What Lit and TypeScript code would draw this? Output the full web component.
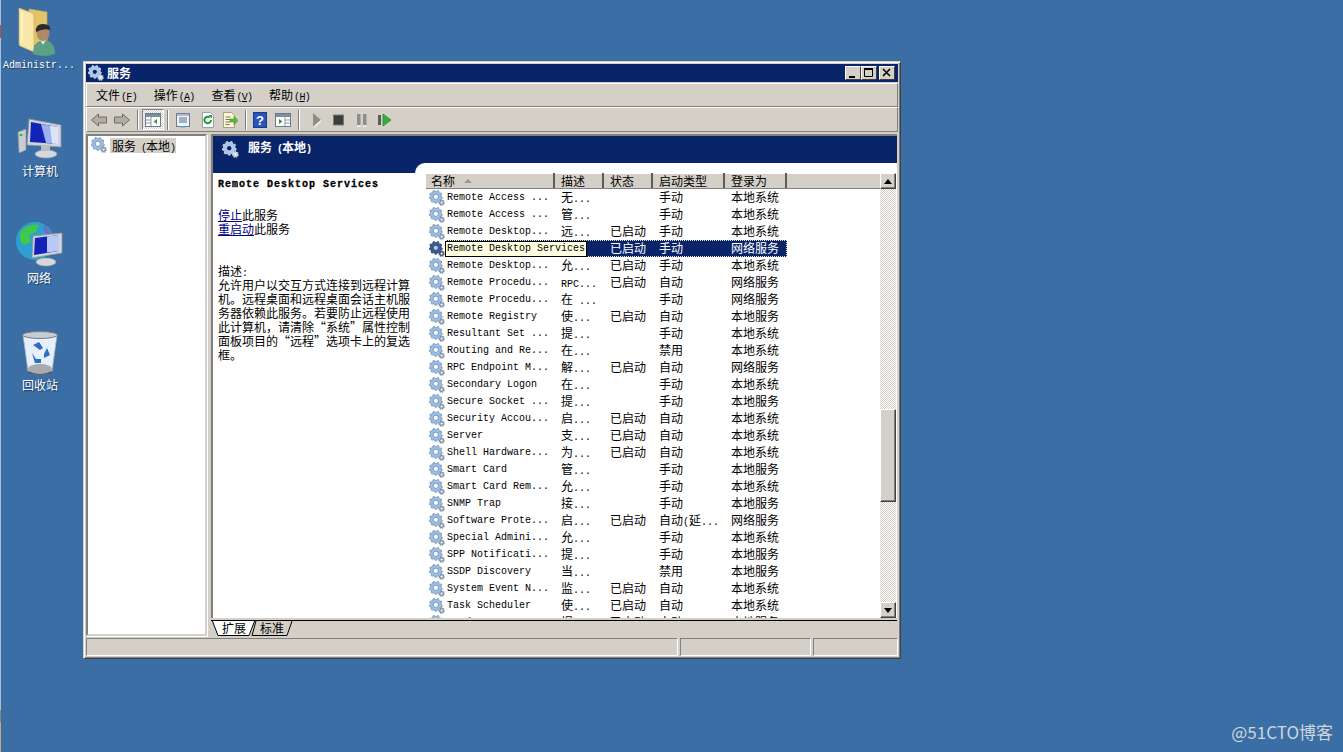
import { LitElement, html, css, svg } from "lit";
import { customElement } from "lit/decorators.js";

// name, desc, status, start type, logon -- name is already elided the way the MMC list does it
const ROWS: string[][] = [
  ["Remote Access ...", "无...", "", "手动", "本地系统"],
  ["Remote Access ...", "管...", "", "手动", "本地系统"],
  ["Remote Desktop...", "远...", "已启动", "手动", "本地系统"],
  ["Remote Desktop Services", "", "已启动", "手动", "网络服务"],
  ["Remote Desktop...", "允...", "已启动", "手动", "本地系统"],
  ["Remote Procedu...", "RPC...", "已启动", "自动", "网络服务"],
  ["Remote Procedu...", "在 ...", "", "手动", "网络服务"],
  ["Remote Registry", "使...", "已启动", "自动", "本地服务"],
  ["Resultant Set ...", "提...", "", "手动", "本地系统"],
  ["Routing and Re...", "在...", "", "禁用", "本地系统"],
  ["RPC Endpoint M...", "解...", "已启动", "自动", "网络服务"],
  ["Secondary Logon", "在...", "", "手动", "本地系统"],
  ["Secure Socket ...", "提...", "", "手动", "本地服务"],
  ["Security Accou...", "启...", "已启动", "自动", "本地系统"],
  ["Server", "支...", "已启动", "自动", "本地系统"],
  ["Shell Hardware...", "为...", "已启动", "自动", "本地系统"],
  ["Smart Card", "管...", "", "手动", "本地服务"],
  ["Smart Card Rem...", "允...", "", "手动", "本地系统"],
  ["SNMP Trap", "接...", "", "手动", "本地服务"],
  ["Software Prote...", "启...", "已启动", "自动(延...", "网络服务"],
  ["Special Admini...", "允...", "", "手动", "本地系统"],
  ["SPP Notificati...", "提...", "", "手动", "本地服务"],
  ["SSDP Discovery", "当...", "", "禁用", "本地服务"],
  ["System Event N...", "监...", "已启动", "自动", "本地系统"],
  ["Task Scheduler", "使...", "已启动", "自动", "本地系统"],
  ["TCP/IP NetBIOS...", "提...", "已启动", "自动", "本地服务"],
];

const COLS = ["描述", "状态", "启动类型", "登录为"];

const DESC = [
  "允许用户以交互方式连接到远程计算",
  "机。远程桌面和远程桌面会话主机服",
  "务器依赖此服务。若要防止远程使用",
  "此计算机\uFF0C请清除“系统”属性控制",
  "面板项目的“远程”选项卡上的复选",
  "框。",
];

// latin runs are 6px wide in the reference's bitmap font, so they go in the mono face
function mixed(text: string) {
  return text
    .split(/([\x20-\x7e]+)/)
    .filter(Boolean)
    .map((part) => (/^[\x20-\x7e]/.test(part) ? html`<span class="mono">${part}</span>` : part));
}

function cog(cx: number, cy: number, r: number, teeth: number) {
  const pts: string[] = [];
  const n = teeth * 4;
  for (let i = 0; i < n; i++) {
    const a = ((i + 0.5) / n) * Math.PI * 2;
    const rr = i % 4 < 2 ? r : r * 0.82;
    pts.push(`${(cx + Math.cos(a) * rr).toFixed(2)},${(cy + Math.sin(a) * rr).toFixed(2)}`);
  }
  return pts.join(" ");
}

function gears(size: number, dark = false, onNavy = false) {
  const body = dark ? "#3a5a94" : onNavy ? "#a9c6ea" : "#9dbde2";
  const edge = dark ? "#24406f" : onNavy ? "#dfeaf8" : "#6288b4";
  const small = dark ? "#56657f" : onNavy ? "#c3ccd8" : "#8f9cae";
  const hole = dark ? "#b8c8e0" : onNavy ? "#0a246a" : "#fff";
  return html`<svg width=${size} height=${size} viewBox="0 0 16 16">
    <polygon points=${cog(12.6, 12.6, 3.3, 7)} fill=${small} />
    <circle cx="12.6" cy="12.6" r="1" fill="#fff" />
    <polygon points=${cog(6.8, 6.8, 6.6, 9)} fill=${body} stroke=${edge} stroke-width="0.7" />
    <circle cx="6.8" cy="6.8" r="2.6" fill=${hole} stroke=${edge} stroke-width="0.8" />
  </svg>`;
}

const ICONS = {
  back: svg`<path d="M.5 8 7.500 2v3h8v6h-8v3z" fill="#b0ada6" stroke="#6f6c65"/>`,
  forward: svg`<path d="M15.500 8 8.500 2v3h-8v6h8v3z" fill="#b0ada6" stroke="#6f6c65"/>`,
  tree: svg`<rect x=".5" y="1.500" width="15" height="13" fill="#fff" stroke="#6b7a8c"/><rect x="1" y="2" width="14" height="3" fill="#7d8da3"/><path d="M6 5v9M1 8h5M1 11h5" stroke="#8a97a8"/><path d="M12 7v5L8.500 9.500z" fill="#2d9a3c"/>`,
  props: svg`<rect x="1.500" y="1.500" width="13" height="13" fill="#eef3fb" stroke="#6e7c90"/><rect x="2" y="2" width="12" height="2" fill="#aebcd0"/><path d="M4 6h8M4 8h8M4 10h8" stroke="#5b6a80"/><rect x="6" y="14" width="4" height="1.500" fill="#39a9e8"/>`,
  refresh: svg`<path d="M2.500 .5h8l3 3v12h-11z" fill="#fff" stroke="#9aa0a8"/><path d="M11 8a3.300 3.300 0 1 1-1.200-2.600" fill="none" stroke="#1f9a3a" stroke-width="2"/><path d="M8.500 3h3.500v3.500z" fill="#1f9a3a"/>`,
  export: svg`<path d="M1.500 .5h8l3 3v12h-11z" fill="#fff8d8" stroke="#a8a080"/><path d="M3.500 5h5M3.500 7.500h5M3.500 10h5M3.500 12.500h4" stroke="#77705a"/><path d="M8 7h4V4l4 4.500-4 4.500v-3H8z" fill="#5cb83c" stroke="#3c8a28" stroke-width=".5"/>`,
  help: svg`<rect x=".5" y=".5" width="13" height="15" fill="#2a55b8" stroke="#1a3a8c"/><text x="7" y="13" font-family="Liberation Sans" font-size="13" font-weight="700" fill="#fff" text-anchor="middle">?</text>`,
  panel: svg`<rect x=".5" y="1.500" width="15" height="13" fill="#fff" stroke="#6b7a8c"/><rect x="1" y="2" width="14" height="3" fill="#7d8da3"/><path d="M10 5v9M10 8h5M10 11h5" stroke="#8a97a8"/><path d="M4 7v5l3.500-2.500z" fill="#2d9a3c"/>`,
  play: svg`<path d="M3 1v14l8-7z" fill="#8f8d88"/><path d="M3 15l8-7v1.500L4 15.500z" fill="#fff"/>`,
  stop: svg`<rect x="2.500" y="3" width="10" height="10" fill="#3d3d3d" stroke="#7a7a78"/>`,
  pause: svg`<rect x="3" y="2" width="3.500" height="11" fill="#8f8d88"/><rect x="9" y="2" width="3.500" height="11" fill="#8f8d88"/><path d="M3 14h3.500M9 14h3.500" stroke="#fff"/>`,
  restart: svg`<rect x="1" y="3" width="3" height="10" fill="#5c5c58"/><path d="M6 2v12l8-6z" fill="#35b040" stroke="#1f8a2c" stroke-width=".7"/>`,
};

@customElement("app-root")
export class AppRoot extends LitElement {
  static styles = css`
    :host {
      display: block;
      position: relative;
      width: 1343px;
      height: 752px;
      overflow: hidden;
      background: #3a6ea5;
      font-family: "Noto Sans CJK SC", sans-serif;
      font-size: 12px;
      color: #000;
    }
    .edge {
      position: absolute;
      left: 0;
      top: 0;
      bottom: 0;
      width: 1px;
      background: linear-gradient(
        #a9c0d8 25px,
        #c8454a 25px,
        #c8454a 38px,
        #a9c0d8 38px,
        #a9c0d8 710px,
        #8c8478 710px,
        #8c8478 722px,
        #c9a878 722px
      );
    }
    .desk {
      position: absolute;
      width: 78px;
      display: flex;
      flex-direction: column;
      align-items: center;
      color: #fff;
      text-shadow: 1px 1px 1px #1c3a5c;
      line-height: 14px;
    }
    .mono {
      font-family: "Liberation Mono", monospace;
      font-size: 10px;
    }
    .watermark {
      position: absolute;
      right: 10px;
      bottom: 9px;
      font-size: 17px;
      line-height: 22px;
      color: #cfd6dd;
    }

    .window {
      position: absolute;
      left: 83px;
      top: 61px;
      width: 818px;
      height: 598px;
      box-sizing: border-box;
      padding: 2px;
      display: flex;
      flex-direction: column;
      background: #d4d0c8;
      border: 1px solid;
      border-color: #d4d0c8 #404040 #404040 #d4d0c8;
      box-shadow: inset 1px 1px 0 #fff, inset -1px -1px 0 #808080;
    }
    .title {
      height: 18px;
      flex: none;
      display: flex;
      align-items: center;
      padding: 0 3px 0 2px;
      background: #0a246a;
      color: #fff;
      font-weight: 700;
    }
    .title span {
      margin-left: 3px;
      line-height: 14px;
    }
    .title-btns {
      margin-left: auto;
      display: flex;
    }
    .cap {
      width: 16px;
      height: 14px;
      box-sizing: border-box;
      background: #d4d0c8;
      border: 1px solid;
      border-color: #fff #404040 #404040 #fff;
      display: flex;
      align-items: center;
      justify-content: center;
    }
    .cap + .cap:last-child {
      margin-left: 2px;
    }
    .menu {
      height: 24px;
      flex: none;
      margin-top: 1px;
      box-sizing: border-box;
      display: flex;
      align-items: center;
      padding: 2px 0 0 9px;
      border: 1px solid;
      border-color: #fff #808080 #808080 #fff;
    }
    .menu-item {
      width: 57.7px;
      line-height: 14px;
      white-space: nowrap;
    }
    .menu-item .mono {
      letter-spacing: -0.7px;
      margin-left: 1px;
    }
    .menu-item u {
      text-underline-offset: 1px;
    }
    .toolbar {
      height: 25px;
      flex: none;
      box-sizing: border-box;
      display: flex;
      align-items: center;
      padding-left: 4px;
      border: 1px solid;
      border-color: #fff #808080 #808080 #fff;
    }
    .tool {
      flex: none;
      display: flex;
      align-items: center;
      justify-content: center;
    }
    .tool.pressed {
      width: 22px;
      height: 21px;
      box-sizing: border-box;
      border: 1px solid;
      border-color: #808080 #fff #fff #808080;
      background: repeating-conic-gradient(#d4d0c8 0 25%, #fff 0 50%) 0 0 / 2px 2px;
    }
    .sep {
      flex: none;
      width: 2px;
      height: 20px;
      background: linear-gradient(90deg, #808080 1px, #fff 1px);
    }

    .main {
      flex: 1;
      min-height: 0;
      margin-top: 2px;
      display: flex;
      gap: 4px;
    }
    .tree {
      width: 121px;
      flex: none;
      box-sizing: border-box;
      background: #fff;
      border: 2px solid;
      border-color: #808080 #d4d0c8 #d4d0c8 #808080;
      box-shadow: 1px 1px 0 #fff;
      padding: 0 0 0 3px;
    }
    .tree-row {
      display: flex;
      align-items: center;
      height: 17px;
    }
    .tree-row .label {
      margin: 2px 0 0 3px;
      padding: 0 1px 0 2px;
      background: #d4d0c8;
      line-height: 15px;
      height: 15px;
      white-space: nowrap;
    }
    .label .mono {
      letter-spacing: -1px;
    }
    .right {
      flex: 1;
      min-width: 0;
      margin-right: 1px;
      display: flex;
      flex-direction: column;
    }
    .pane {
      flex: 1;
      min-height: 0;
      display: flex;
      flex-direction: column;
      border-top: 2px solid #808080;
      border-left: 2px solid #808080;
      background: #0a246a;
    }
    .pane-head {
      height: 27px;
      flex: none;
      display: flex;
      align-items: center;
      padding-left: 9px;
      color: #fff;
      font-weight: 700;
    }
    .pane-head .label {
      margin: 0 0 3px 9px;
      line-height: 14px;
    }
    .pane-body {
      flex: 1;
      min-height: 0;
      display: flex;
    }
    .task {
      width: 202px;
      flex: none;
      box-sizing: border-box;
      margin-top: 10px;
      padding: 5px 0 0 5px;
      background: #fff;
      line-height: 14px;
      white-space: nowrap;
    }
    .task-title {
      font-family: "Liberation Mono", monospace;
      font-size: 10px;
      font-weight: 700;
      letter-spacing: 1px;
      -webkit-text-stroke: 0.3px #000;
    }
    .task-actions {
      margin-top: 16px;
    }
    .task-actions a {
      color: #000080;
      text-decoration: underline;
    }
    .task-desc {
      margin-top: 28px;
    }
    .task-desc div {
      height: 14px;
    }
    .listwrap {
      flex: 1;
      min-width: 0;
      background: #fff;
      border-top-left-radius: 10px;
      padding: 10px 1px 0 11px;
      display: flex;
    }
    .list {
      flex: 1;
      min-width: 0;
      overflow: hidden;
    }
    .grid {
      display: grid;
      grid-template-columns: 129px 49px 49px 72px 62px;
      width: 361px;
    }
    .heads {
      height: 16px;
      width: 100%;
      display: flex;
      background: #d4d0c8;
      box-sizing: border-box;
      border-bottom: 1px solid #808080;
      box-shadow: inset 0 1px 0 #fff;
    }
    .head {
      box-sizing: border-box;
      padding-left: 6px;
      border-right: 2px solid #5c5c58;
      line-height: 15px;
      white-space: nowrap;
      overflow: hidden;
      display: flex;
      align-items: center;
    }
    .sort {
      margin-left: 9px;
      width: 0;
      height: 0;
      border: 4px solid transparent;
      border-top: 0;
      border-bottom: 4px solid #9a9890;
    }
    .row {
      height: 17px;
      position: relative;
      white-space: nowrap;
    }
    .row > div {
      padding-left: 6px;
      overflow: hidden;
      line-height: 15px;
    }
    .row .name {
      display: flex;
      align-items: center;
      height: 17px;
      box-sizing: border-box;
      padding-left: 3px;
    }
    .row .name .mono {
      margin-left: 2px;
    }
    .row.selected {
      background: linear-gradient(90deg, #fff 19px, #0a246a 19px);
      color: #fff;
    }
    .row .focus {
      position: absolute;
      inset: 0 0 0 19px;
      border: 1px dotted #e8e8c8;
    }
    .row .tip {
      position: absolute;
      left: 19px;
      top: 1px;
      width: 142px;
      height: 16px;
      box-sizing: border-box;
      padding-left: 1px;
      background: #ffffe1;
      color: #000;
      border: 1px solid #000;
      line-height: 14px;
    }
    .scroll {
      width: 16px;
      flex: none;
      display: flex;
      flex-direction: column;
      margin-left: auto;
      background: repeating-conic-gradient(#d4d0c8 0 25%, #fff 0 50%) 0 0 / 2px 2px;
    }
    .sb-btn,
    .sb-thumb {
      box-sizing: border-box;
      background: #d4d0c8;
      border: 1px solid;
      border-color: #fff #404040 #404040 #fff;
      box-shadow: inset -1px -1px 0 #808080;
    }
    .sb-btn {
      height: 16px;
      flex: none;
      display: flex;
      align-items: center;
      justify-content: center;
    }
    .sb-thumb {
      height: 93px;
      flex: none;
      margin-top: 220px;
    }
    .sb-fill {
      flex: 1;
    }
    .tabs {
      height: 16px;
      flex: none;
      margin-top: 2px;
      border-top: 1px solid #000;
      box-sizing: border-box;
      display: flex;
      padding-left: 1px;
    }
    .tab {
      position: relative;
      height: 15px;
      line-height: 14px;
      text-align: center;
    }
    .tab svg {
      position: absolute;
      left: 0;
      top: 0;
    }
    .tab span {
      position: relative;
    }
    .status {
      height: 18px;
      flex: none;
      margin-top: 2px;
      display: flex;
      gap: 2px;
    }
    .status div {
      box-sizing: border-box;
      border: 1px solid;
      border-color: #808080 #fff #fff #808080;
    }
  `;

  private tool(name: keyof typeof ICONS, left: number) {
    return html`<div class="tool" style="margin-left:${left}px">
      <svg width="16" height="16" viewBox="0 0 16 16">${ICONS[name]}</svg>
    </div>`;
  }

  private renderRow(r: string[], i: number) {
    const selected = i === 3;
    return html`<div class="row grid ${selected ? "selected" : ""}">
      <div class="name">${gears(16, selected)}<span class="mono">${selected ? "" : r[0]}</span></div>
      <div>${mixed(r[1])}</div>
      <div>${r[2]}</div>
      <div>${mixed(r[3])}</div>
      <div>${r[4]}</div>
      ${selected ? html`<i class="focus"></i><span class="tip mono">${r[0]}</span>` : ""}
    </div>`;
  }

  private desktop() {
    return html`
      <div class="edge"></div>
      <div class="desk" style="left:0;top:8px">
        <svg width="48" height="48" viewBox="0 0 48 48">
          <path d="M14 1 32 4v36L14 36z" fill="#e4c46a" stroke="#cfa94f" stroke-width=".6" />
          <path d="M4 0 17 5q2 1 2 3v36L5 38q-1-1-1-3z" fill="#f8e7a8" stroke="#d0ae5c" stroke-width=".7" />
          <path d="M7 4v30" stroke="#fff6d0" stroke-width="1.500" />
          <path d="M18 46q0-13 11-14 11 1 11 14-11 4-22 0z" fill="#5f9f85" />
          <path d="M25 32h6l-3 5z" fill="#d7e6de" />
          <ellipse cx="28" cy="25" rx="6.500" ry="8" fill="#b08a68" />
          <path d="M21 24q-1-8 7-8 8 0 7 6-6-2-14 2z" fill="#2a2a2a" />
        </svg>
        <span class="mono" style="margin-top:3px">Administr...</span>
      </div>
      <div class="desk" style="left:1px;top:118px">
        <svg width="48" height="44" viewBox="0 0 48 44">
          <path d="M2 14 10 11v21l-7 3z" fill="#c9ccd0" stroke="#8e9298" stroke-width=".6" />
          <rect x="3.500" y="16" width="3" height="2" fill="#38c038" />
          <path d="M13 1 45 7v22L11 27z" fill="#d0d4da" stroke="#8d939c" stroke-width=".8" />
          <path d="M15 4 42 9v17L14 24z" fill="#1224b8" />
          <path d="M25 6 42 9v17l-12-1z" fill="#9db0f0" />
          <path d="M34 8l8 1v17l-6-.5z" fill="#dde4fa" />
          <ellipse cx="30" cy="36" rx="11" ry="4" fill="#d6d8dc" stroke="#a0a4aa" stroke-width=".6" />
          <path d="M25 27h9v6h-9z" fill="#b8bbc0" />
        </svg>
        <span style="margin-top:2px">计算机</span>
      </div>
      <div class="desk" style="left:0;top:221px">
        <svg width="48" height="46" viewBox="0 0 48 46">
          <circle cx="20" cy="20" r="19" fill="#2f9fd0" />
          <path d="M6 10q8-8 18-6l-3 7-7 3 2 7-8 3q-5-7-2-14zM26 24l8 2-4 9-5 2z" fill="#3fc84a" />
          <path d="M28 4q6 3 9 8l-7 2z" fill="#6a70c8" />
          <path d="M18 15 47 12v20l-30 5z" fill="#d2d5da" stroke="#8d939c" stroke-width=".8" />
          <path d="M20 17 44 14v16l-25 4z" fill="#1224b8" />
          <path d="M32 15.500 44 14v16l-12 1.500z" fill="#bcc8f4" />
          <ellipse cx="31" cy="41" rx="10" ry="4" fill="#d6d8dc" stroke="#a0a4aa" stroke-width=".6" />
        </svg>
        <span style="margin-top:4px">网络</span>
      </div>
      <div class="desk" style="left:1px;top:330px">
        <svg width="38" height="46" viewBox="0 0 38 46">
          <path d="M2 5 7 41q12 7 24 0l5-36z" fill="#e6f0fa" stroke="#a7b4c2" stroke-width=".8" />
          <ellipse cx="19" cy="5" rx="17.500" ry="3.500" fill="#c4ccd4" stroke="#75797e" />
          <ellipse cx="19" cy="39" rx="12" ry="5" fill="#a8aaac" />
          <path d="M7 41q12 6 24 0l-1 2q-11 4-22 0z" fill="#55585c" />
          <path d="M12 15l6-3 4 6-3 2zM26 18l3 7-6 3v-4zM11 23l4 6h5v4h-6z" fill="#2f6cc4" />
        </svg>
        <span style="margin-top:2px">回收站</span>
      </div>
      <div class="watermark">@51CTO博客</div>
    `;
  }

  render() {
    return html`
      ${this.desktop()}
      <div class="window">
        <div class="title">
          ${gears(16, false, true)}
          <span>服务</span>
          <div class="title-btns">
            <div class="cap">
              <svg width="10" height="10" viewBox="0 0 10 10"><path d="M1 8h6v2H1z" /></svg>
            </div>
            <div class="cap">
              <svg width="10" height="10" viewBox="0 0 10 10"><path d="M.5 1.500h8v7h-8z" fill="none" stroke="#000" /><path d="M0 0h9v2H0z" /></svg>
            </div>
            <div class="cap">
              <svg width="10" height="10" viewBox="0 0 10 10"><path d="M1 1l7 7M8 1 1 8" stroke="#000" stroke-width="1.600" /></svg>
            </div>
          </div>
        </div>
        <div class="menu">
          ${[["文件", "F"], ["操作", "A"], ["查看", "V"], ["帮助", "H"]].map(
            ([t, k]) => html`<div class="menu-item">${t}<span class="mono">(<u>${k}</u>)</span></div>`
          )}
        </div>
        <div class="toolbar">
          ${this.tool("back", 0)} ${this.tool("forward", 7)}
          <div class="sep" style="margin-left:7px"></div>
          <div class="tool pressed" style="margin-left:3px">
            <svg width="16" height="16" viewBox="0 0 16 16">${ICONS.tree}</svg>
          </div>
          <div class="sep" style="margin-left:3px"></div>
          ${this.tool("props", 6)} ${this.tool("refresh", 9)} ${this.tool("export", 6)}
          <div class="sep" style="margin-left:7px"></div>
          ${this.tool("help", 6)} ${this.tool("panel", 6)}
          <div class="sep" style="margin-left:7px"></div>
          ${this.tool("play", 10)} ${this.tool("stop", 5)} ${this.tool("pause", 7)} ${this.tool("restart", 7)}
        </div>
        <div class="main">
          <div class="tree">
            <div class="tree-row">${gears(16)}<span class="label">${mixed("服务 (本地)")}</span></div>
          </div>
          <div class="right">
            <div class="pane">
              <div class="pane-head">${gears(17, false, true)}<span class="label">${mixed("服务 (本地)")}</span></div>
              <div class="pane-body">
                <div class="task">
                  <div class="task-title">Remote Desktop Services</div>
                  <div class="task-actions">
                    <div><a>停止</a>此服务</div>
                    <div><a>重启动</a>此服务</div>
                  </div>
                  <div class="task-desc" lang="zh-CN">
                    <div>${mixed("描述:")}</div>
                    ${DESC.map((l) => html`<div>${l}</div>`)}
                  </div>
                </div>
                <div class="listwrap">
                  <div class="list">
                    <div class="heads">
                      <div class="head" style="width:129px;padding-left:5px">名称<i class="sort"></i></div>
                      ${COLS.map(
                        (c, i) => html`<div class="head" style="width:${[49, 49, 72, 62][i]}px">${c}</div>`
                      )}
                    </div>
                    ${ROWS.map((r, i) => this.renderRow(r, i))}
                  </div>
                  <div class="scroll">
                    <div class="sb-btn">
                      <svg width="8" height="5" viewBox="0 0 8 5"><path d="M4 0 8 5H0z" /></svg>
                    </div>
                    <div class="sb-thumb"></div>
                    <div class="sb-fill"></div>
                    <div class="sb-btn">
                      <svg width="8" height="5" viewBox="0 0 8 5"><path d="M0 0h8L4 5z" /></svg>
                    </div>
                  </div>
                </div>
              </div>
            </div>
            <div class="tabs">
              <div class="tab" style="width:44px">
                <svg width="44" height="15" viewBox="0 0 44 15">
                  <path d="M0 -1 6 14.500H37L43 -1" fill="#fff" stroke="#000" />
                </svg>
                <span>扩展</span>
              </div>
              <div class="tab" style="width:42px;margin-left:-5px">
                <svg width="42" height="15" viewBox="0 0 42 15">
                  <path d="M5 0 1 14.500H36L41 0" fill="none" stroke="#000" />
                </svg>
                <span>标准</span>
              </div>
            </div>
          </div>
        </div>
        <div class="status">
          <div style="width:592px"></div>
          <div style="width:131px"></div>
          <div style="flex:1"></div>
        </div>
      </div>
    `;
  }
}
